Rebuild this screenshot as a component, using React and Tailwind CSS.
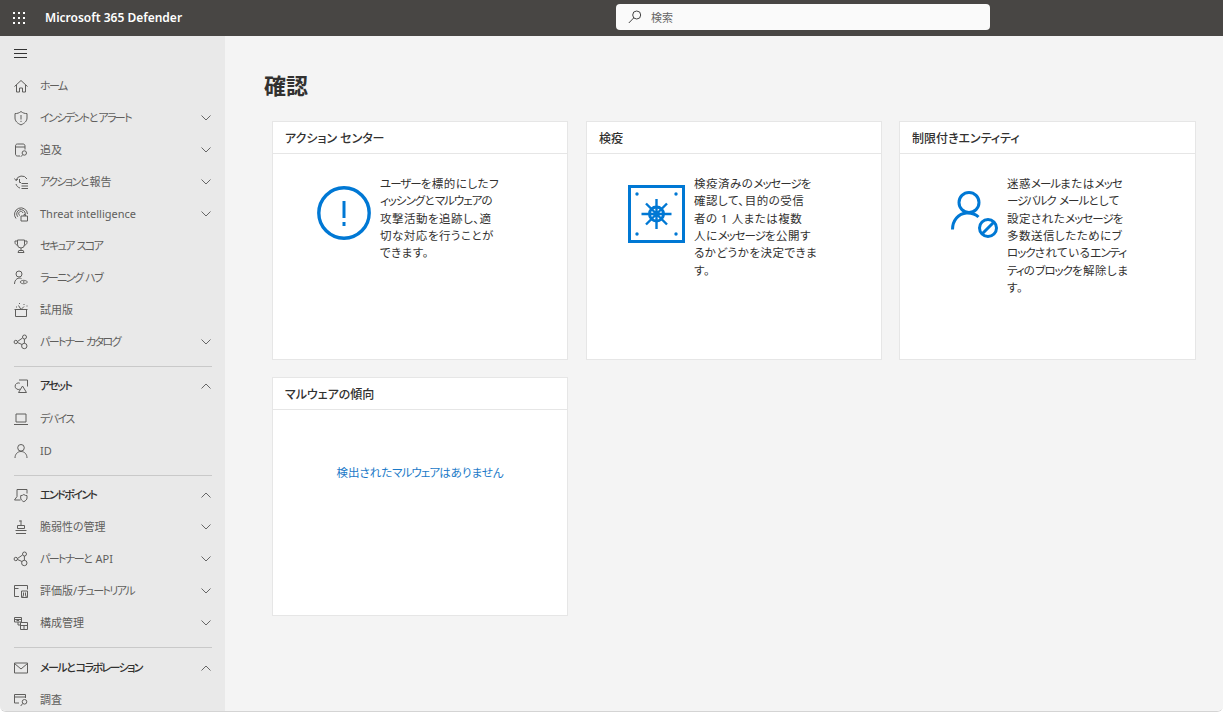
import React from 'react';

const icons = {
    home: <path d="M1.500 8.500 8 2.500l6.500 6M3.500 7v7h3v-4h3v4h3V7" />,
    shield: <path d="M8 1.500C6.200 3 4.200 3.600 2 3.600V8c0 3 2.400 5.400 6 6.900 3.600-1.500 6-3.900 6-6.900V3.600c-2.200 0-4.200-.6-6-2.100ZM8 5v4.500M8 10.800v1.200" />,
    hunt: <path d="M7 14H4.500C3.200 14 2.500 13.200 2.500 12V4c0-1.200.7-2 2-2H10c1.300 0 2 .8 2 2v3.500M2.500 5H12M9.600 12.800 7.800 14.800M13.500 11a2.200 2.200 0 1 1-4.400 0 2.200 2.200 0 0 1 4.400 0Z" />,
    action: <path d="M1.500 4.500 3 6.500l2-1.500M3 6.500A6 6 0 0 1 14 5M3 10c.6 2 2 3.500 4 4M6.500 5v3.500H8M8.500 9.500H15M8.500 12H15M8.500 14.500H15" />,
    threat: <path d="M3 12.500A6.500 6.500 0 1 1 14.500 8M4.800 10.800A4.300 4.300 0 1 1 12.300 8M6.800 9.500A2.200 2.200 0 1 1 10 7M8 10h6.500v5H8ZM11 10v-1.500h1.500V10" />,
    trophy: <path d="M4.500 2h7v4.500a3.500 3.500 0 0 1-7 0ZM4.500 3H2v1.500C2 6 3.200 7 4.800 7.200M11.500 3H14v1.500C14 6 12.800 7 11.200 7.200M8 10v2.500M5 14.500h6l-.8-2H5.800Z" />,
    learn: <path d="M9 4a3 3 0 1 1-6 0 3 3 0 0 1 6 0ZM1.500 14c0-3 1.500-5.500 4.500-6 1 0 1.800.2 2.500.6M7 12c1.500-2.200 5.500-2.200 7.500 0-2 2.300-6 2.300-7.500 0ZM10.800 11v2" />,
    trial: <path d="M2.500 7.500h11v7h-11ZM1.500 7.500h13M8 7.500l3-3M8 7.500 5.500 3.500M11 2v1M13.500 4h1M3 5h1M6 1.500h1" />,
    partner: <path d="M4.500 8a1.700 1.700 0 1 1-3.400 0 1.700 1.700 0 0 1 3.400 0ZM13.500 3a2 2 0 1 1-4 0 2 2 0 0 1 4 0ZM14 12a2.700 2.700 0 1 1-5.400 0 2.700 2.700 0 0 1 5.400 0ZM4.500 7.500 9.500 4M11.400 5v4.300M4.500 8.500l4.500 2" />,
    asset: <path d="M6.800 5.200a3.300 3.300 0 1 0 0 6M6 2h8.500v6.500M5.500 14.500 9.500 8l4 6.500Z" />,
    device: <path d="M3 3h10v8H3ZM1 13.500h14" />,
    person: <path d="M11.300 4.800a3.300 3.300 0 1 1-6.600 0 3.300 3.300 0 0 1 6.600 0ZM2 15c0-3.800 2.500-6.500 6-6.500s6 2.700 6 6.500" />,
    endpoint: <path d="M4 9.500V2.500h10v4M4 9.500l-2.500 3.500h6M10.800 7.500c1 .8 2 1.100 3.200 1.100V11c0 1.500-1.300 2.800-3.200 3.700C9 13.800 7.700 12.500 7.700 11V8.600c1.200 0 2.200-.3 3.100-1.100Z" />,
    vuln: <path d="M8 1.500v5M6 2h2.500M4.500 6.500h7v3h-7ZM2.500 11.500h11M3 14.500h10" />,
    evaluate: <path d="M6 13.500H1.500v-11h13v4M1.500 5.500h4M8.500 8h6v6.500h-6ZM10.500 9.500v2.500l-1 2.500h4l-1-2.500V9.500" />,
    config: <path d="M1.500 2.500h7v4.500h-7ZM1.500 4.500h7M3.500 5.500H6M5 7v3H7.500M7.500 7.500h7v7h-7ZM7.500 10.500h7M11 10.500v4" />,
    mail: <path d="M1.500 3h13v10h-13ZM1.500 3.500 8 9l6.500-5.500" />,
    explore: <path d="M6 11H1.500V2.500h11V6M1.500 5h11M13.800 9.800a2.300 2.300 0 1 1-4.600 0 2.300 2.300 0 0 1 4.600 0ZM9.700 11.500l-2 2.500" />,
};

// the reference font sets katakana much narrower than kanji
function Kana({ text, className }) {
    return text.split(/([ァ-ヶー]+)/).map((part, i) =>
        i % 2 ? <span key={i} className={className}>{part}</span> : part
    );
}

function NavIcon({ name }) {
    return (
        <svg viewBox="0 0 16 16" fill="none" stroke="#5f5e5c" strokeWidth="1" className="w-[16px] h-[16px] shrink-0">
            {icons[name]}
        </svg>
    );
}

function Chevron({ up }) {
    return (
        <svg viewBox="0 0 10 6" fill="none" stroke="#666" strokeWidth="1" className="w-[10px] h-[6px] shrink-0">
            <path d={up ? 'M0.500 5.500 5 1l4.500 4.500' : 'M0.500 0.500 5 5l4.500-4.500'} />
        </svg>
    );
}

function NavItem({ icon, label, chevron, up, bold }) {
    return (
        <div className={`flex items-center h-[32px] pl-[13px] pr-[14px] text-[11px] ${bold ? 'font-medium text-[#323130]' : 'text-[#5f5e5c]'}`}>
            <NavIcon name={icon} />
            <span className="ml-[11px] mt-px flex-1 whitespace-nowrap">
                <Kana text={label} className="tracking-[-1.600px]" />
            </span>
            {chevron && <Chevron up={up} />}
        </div>
    );
}

function Divider() {
    return <div className="h-px bg-[#c9c9c9] ml-[14px] mr-[13px] mt-[8px] mb-[3px]" />;
}

function Card({ title, className = '', children }) {
    return (
        <div className={`h-[239px] bg-white border border-[#e6e6e6] flex flex-col ${className}`}>
            <div className="h-[32px] shrink-0 border-b border-[#e6e6e6] pl-[12px] pt-[2px] flex items-center text-[12px] font-medium text-[#323130] whitespace-nowrap">
                {title}
            </div>
            {children}
        </div>
    );
}

function CardText({ lines }) {
    return (
        <div className="mt-[21px] text-[11.500px] leading-[17.350px] tracking-[0.500px] text-[#323130] whitespace-nowrap">
            {lines.map((l, i) => <div key={i}><Kana text={l} className="tracking-[-1px]" /></div>)}
        </div>
    );
}

export default function App() {
    return (
        <div className="w-[1223px] h-[713px] overflow-hidden flex flex-col bg-white font-['Noto_Sans','Noto_Sans_CJK_JP',sans-serif] [font-feature-settings:'palt']">
            <header className="h-[36px] shrink-0 bg-[#484644] flex items-center relative">
                <div className="w-[12px] h-[12px] ml-[13px] grid grid-cols-3 gap-[3px]">
                    {[0, 1, 2, 3, 4, 5, 6, 7, 8].map(i => <span key={i} className="w-[2px] h-[2px] bg-white" />)}
                </div>
                <span className="ml-[20px] text-[12px] font-semibold text-white whitespace-nowrap">Microsoft 365 Defender</span>
                <div className="absolute left-[616px] top-[4px] w-[374px] h-[26px] bg-[#fafafa] rounded-[4px] flex items-center pl-[12px]">
                    <svg viewBox="0 0 14 14" fill="none" stroke="#444" strokeWidth="1" className="w-[14px] h-[14px]">
                        <circle cx="8.700" cy="5" r="4" />
                        <path d="M5.800 7.800 0.800 13" />
                    </svg>
                    <span className="ml-[9px] mt-[2px] text-[11px] text-[#666]">検索</span>
                </div>
            </header>

            <div className="flex flex-1 min-h-0 border-b border-[#d4d4d4] mb-[1px] rounded-b-[6px] overflow-hidden">
                <aside className="w-[225px] shrink-0 bg-[#e9e9e9] overflow-hidden">
                    <div className="h-[34px] pl-[14px] flex items-center">
                        <svg viewBox="0 0 13 9" fill="none" stroke="#333" strokeWidth="1" className="w-[13px] h-[9px] mt-[1px]">
                            <path d="M0 0.500h13M0 4.500h13M0 8.500h13" />
                        </svg>
                    </div>
                    <NavItem icon="home" label="ホーム" />
                    <NavItem icon="shield" label="インシデントとアラート" chevron />
                    <NavItem icon="hunt" label="追及" chevron />
                    <NavItem icon="action" label="アクションと報告" chevron />
                    <NavItem icon="threat" label="Threat intelligence" chevron />
                    <NavItem icon="trophy" label="セキュア スコア" />
                    <NavItem icon="learn" label="ラーニング ハブ" />
                    <NavItem icon="trial" label="試用版" />
                    <NavItem icon="partner" label="パートナー カタログ" chevron />
                    <Divider />
                    <NavItem icon="asset" label="アセット" chevron up bold />
                    <div className="h-px" />
                    <NavItem icon="device" label="デバイス" />
                    <NavItem icon="person" label="ID" />
                    <Divider />
                    <NavItem icon="endpoint" label="エンドポイント" chevron up bold />
                    <NavItem icon="vuln" label="脆弱性の管理" chevron />
                    <NavItem icon="partner" label="パートナーと API" chevron />
                    <NavItem icon="evaluate" label="評価版/チュートリアル" chevron />
                    <NavItem icon="config" label="構成管理" chevron />
                    <Divider />
                    <div className="h-px" />
                    <NavItem icon="mail" label="メールとコラボレーション" chevron up bold />
                    <NavItem icon="explore" label="調査" />
                </aside>

                <main className="flex-1 bg-[#f4f4f4] pl-[47px] pr-[27px]">
                    <h1 className="-ml-[8px] mt-[33px] h-[52px] text-[22px] leading-[32px] font-semibold text-[#323130]">確認</h1>
                    <div className="grid grid-cols-3 gap-x-[18px] gap-y-[17px] w-[924px]">
                        <Card title="アクション センター">
                            <div className="flex flex-1">
                                <div className="w-[107px] shrink-0 pl-[44px] pt-[32px]">
                                    <svg viewBox="0 0 54 54" fill="none" stroke="#0078d4" className="w-[54px] h-[54px]">
                                        <circle cx="27" cy="27" r="25.200" strokeWidth="3.400" />
                                        <path d="M27 15v17M27 36v4" strokeWidth="3" />
                                    </svg>
                                </div>
                                <CardText lines={['ユーザーを標的にしたフ', 'ィッシングとマルウェアの', '攻撃活動を追跡し、適', '切な対応を行うことが', 'できます。']} />
                            </div>
                        </Card>
                        <Card title="検疫">
                            <div className="flex flex-1">
                                <div className="w-[107px] shrink-0 pl-[41px] pt-[31px]">
                                    <svg viewBox="0 0 57 58" fill="none" stroke="#0078d4" className="w-[57px] h-[58px]">
                                        <rect x="1.500" y="1.500" width="54" height="55" strokeWidth="3" />
                                        <g fill="#0078d4" stroke="none">
                                            <circle cx="9" cy="9" r="1.700" />
                                            <circle cx="48" cy="9" r="1.700" />
                                            <circle cx="9" cy="49" r="1.700" />
                                            <circle cx="48" cy="49" r="1.700" />
                                        </g>
                                        <circle cx="28.500" cy="29" r="7" strokeWidth="3" />
                                        <path d="M28.500 14v30M13.500 29h30M18 18.500l21 21M39 18.500l-21 21" strokeWidth="2.400" />
                                    </svg>
                                </div>
                                <CardText lines={['検疫済みのメッセージを', '確認して、目的の受信', '者の 1 人または複数', '人にメッセージを公開す', 'るかどうかを決定できま', 'す。']} />
                            </div>
                        </Card>
                        <Card title="制限付きエンティティ" className="-ml-px">
                            <div className="flex flex-1">
                                <div className="w-[107px] shrink-0 pl-[51px] pt-[37px]">
                                    <svg viewBox="0 0 47 47" fill="none" stroke="#0078d4" strokeWidth="3" className="w-[47px] h-[47px]">
                                        <circle cx="18" cy="11.500" r="10" />
                                        <path d="M1.500 38.500c0-9 6-16 14-16.500 5-.2 9 1 12 4" />
                                        <circle cx="37" cy="37" r="8.500" />
                                        <path d="M31 43l12-12" />
                                    </svg>
                                </div>
                                <CardText lines={['迷惑メールまたはメッセ', 'ージバルク メールとして', '設定されたメッセージを', '多数送信したためにブ', 'ロックされているエンティ', 'ティのブロックを解除しま', 'す。']} />
                            </div>
                        </Card>
                        <Card title="マルウェアの傾向">
                            <div className="flex justify-center pt-[54px] text-[11.500px] leading-[18px] text-[#1b7ac8]">
                                <span><Kana text="検出されたマルウェアはありません" className="tracking-[-0.900px]" /></span>
                            </div>
                        </Card>
                    </div>
                </main>
            </div>
        </div>
    );
}
